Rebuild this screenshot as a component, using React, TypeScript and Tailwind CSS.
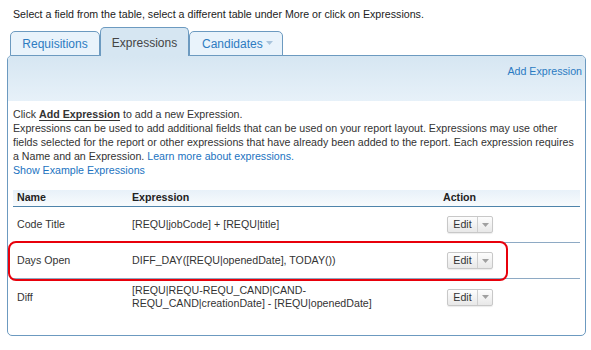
import React from "react";

type Row = { name: string; expr: React.ReactNode; highlight?: boolean };

const ROWS: Row[] = [
  { name: "Code Title", expr: "[REQU|jobCode] + [REQU|title]" },
  { name: "Days Open", expr: "DIFF_DAY([REQU|openedDate], TODAY())", highlight: true },
  {
    name: "Diff",
    expr: (
      <>
        [REQU|REQU-REQU_CAND|CAND-
        <br />
        REQU_CAND|creationDate] - [REQU|openedDate]
      </>
    ),
  },
];

function Caret({ className }: { className: string }) {
  return (
    <svg width="7" height="4" viewBox="0 0 7 4" className={className}>
      <path d="M0 0h7L3.5 4z" fill="currentColor" />
    </svg>
  );
}

function EditButton() {
  return (
    <div className="flex h-[17px] w-[46px] rounded-[2px] border border-[#c8c8c8] bg-gradient-to-b from-[#fdfdfd] to-[#e8e8e8] shadow-[0_1px_1px_rgba(0,0,0,0.08)]">
      <span className="flex w-[30px] items-center justify-center border-r border-[#cfcfcf] leading-none text-[#333]">
        Edit
      </span>
      <span className="flex flex-1 items-center justify-center">
        <Caret className="text-[#a0a0a0]" />
      </span>
    </div>
  );
}

export default function App() {
  return (
    <div className="h-[350px] w-[591px] overflow-hidden bg-white font-['Liberation_Sans',Arial,sans-serif] text-[10.65px] text-[#333]">
      <p className="pl-[13px] pt-[7px] leading-[14px] text-[#222]">
        Select a field from the table, select a different table under More or click on Expressions.
      </p>

      {/* Tabs */}
      <div className="relative z-10 -mb-px mt-[6px] flex items-end pl-[10px]">
        <div className="flex h-[25px] w-[90px] items-center justify-center rounded-t-[5px] border border-[#6c9ac0] bg-[#e9f3fb] text-[12px] text-[#2e7cc1]">
          Requisitions
        </div>
        <div className="flex h-[29px] w-[89px] items-center justify-center rounded-t-[5px] border border-b-0 border-[#6c9ac0] bg-[#d6e6f2] pt-[2px] text-[12px] text-[#444]">
          Expressions
        </div>
        <div className="flex h-[25px] w-[94px] items-center rounded-t-[5px] border border-[#6c9ac0] bg-[#e9f3fb] pl-[12px] text-[12px] text-[#2e7cc1]">
          Candidates
          <Caret className="ml-[3px] mt-[-1px] text-[#a9c4dc]" />
        </div>
      </div>

      {/* Panel */}
      <div className="ml-[7px] w-[579px] rounded-[5px] border border-[#6c9ac0] pb-[20px]">
        <div className="flex h-[45px] justify-end rounded-t-[4px] bg-gradient-to-b from-[#d6e6f2] to-[#e7f1f9] pr-[3px] pt-[8px]">
          <span className="leading-[14px] text-[#2b7bc2]">Add Expression</span>
        </div>

        <div className="px-[5px] pt-[6px]">
          <p className="whitespace-nowrap leading-[14px] text-[#333]">
            Click <span className="font-bold text-[#333] underline underline-offset-2">Add Expression</span> to add a new
            Expression.
            <br />
            Expressions can be used to add additional fields that can be used on your report layout. Expressions may use
            other
            <br />
            fields selected for the report or other expressions that have already been added to the report. Each
            expression requires
            <br />
            a Name and an Expression. <span className="text-[#2273bf]">Learn more about expressions.</span>
            <br />
            <span className="text-[#2273bf]">Show Example Expressions</span>
          </p>

          {/* Table */}
          <div className="mt-[13px] w-[567px]">
            <div className="grid h-[17px] grid-cols-[115px_311px_141px] items-center border-b border-[#4f84ab] bg-gradient-to-b from-[#e8f1f9] to-[#f8fbfd] font-bold text-[#222]">
              <span className="pl-[4px]">Name</span>
              <span className="pl-[4px]">Expression</span>
              <span className="pl-[4px]">Action</span>
            </div>
            {ROWS.map((row, i) => (
              <div
                key={row.name}
                className={`relative grid h-[36px] grid-cols-[115px_311px_141px] items-center ${
                  i < ROWS.length - 1 ? "border-b border-[#8eaac4]" : ""
                }`}
              >
                <span className="pl-[4px] leading-[13px]">{row.name}</span>
                <span className="pl-[4px] leading-[13px]">{row.expr}</span>
                <span className="pl-[8px]">
                  <EditButton />
                </span>
                {row.highlight && (
                  <div className="pointer-events-none absolute -left-[5px] -top-[2px] h-[40px] w-[500px] rounded-[8px] border-2 border-[#e8000b]" />
                )}
              </div>
            ))}
          </div>
        </div>
      </div>
    </div>
  );
}
